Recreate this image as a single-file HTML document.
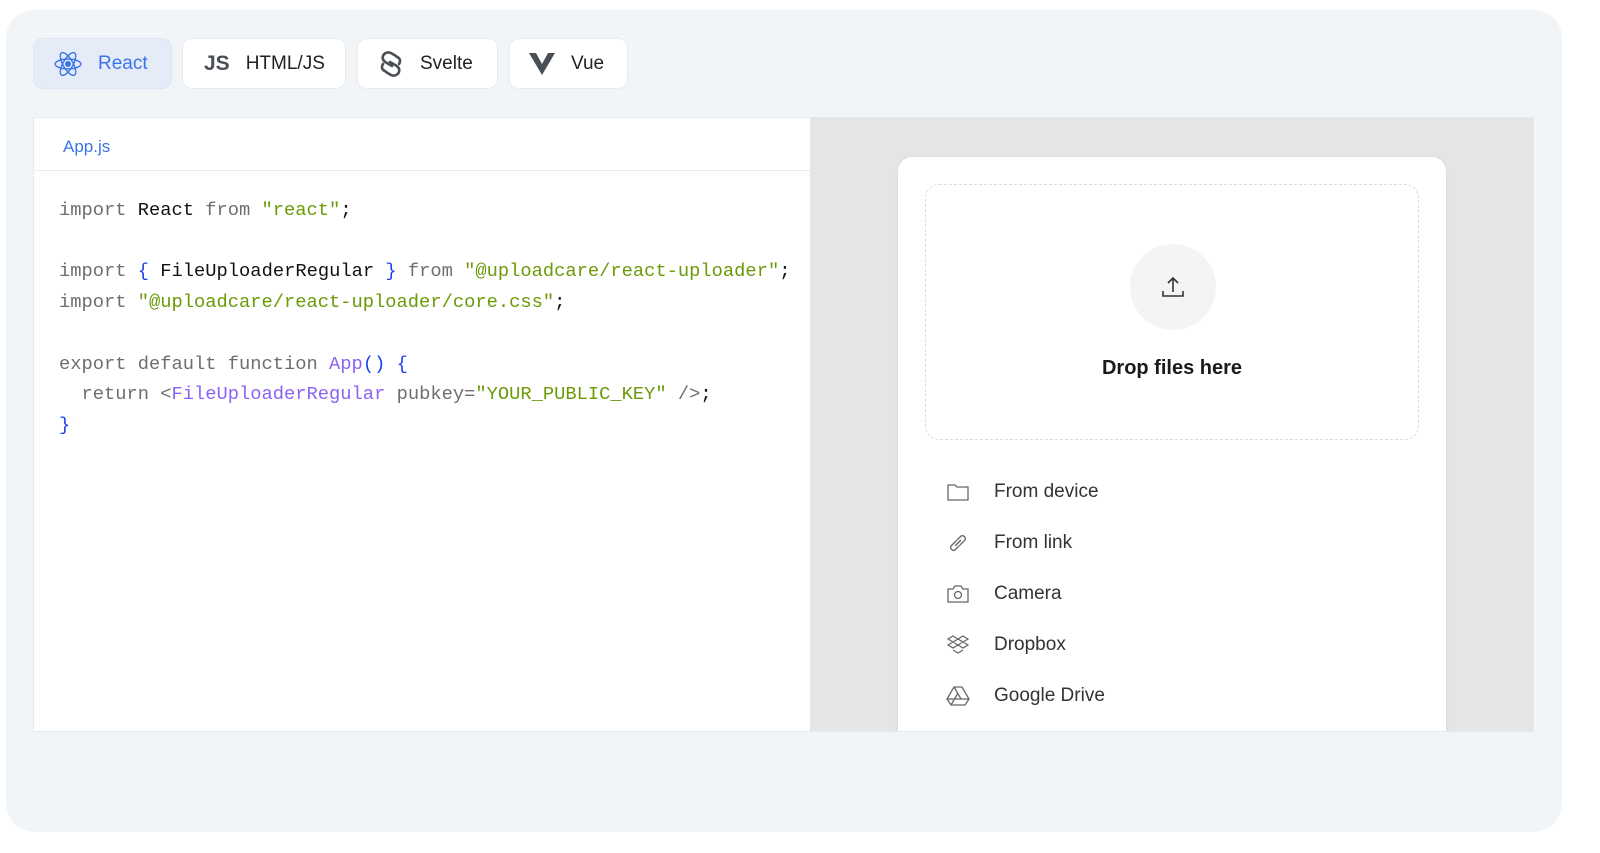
<!DOCTYPE html>
<html><head><meta charset="utf-8"><style>
*{box-sizing:border-box;margin:0;padding:0}
body{width:1600px;height:853px;background:#fff;font-family:"Liberation Sans",sans-serif;position:relative;overflow:hidden}
.outer{position:absolute;left:6px;top:10px;width:1556px;height:822px;background:#f2f5f8;border-radius:28px}
.tab{position:absolute;top:38px;height:51px;background:#fff;border:1px solid #e8ecf1;border-radius:10px;display:flex;align-items:center;font-size:19px;color:#222}
.tab svg{margin-right:16px}
.panel{position:absolute;left:33px;top:117px;width:1501px;height:615px;background:#fff;border:1px solid #e6e9ee;overflow:hidden}
.code{position:absolute;left:0;top:0;width:776px;height:615px;background:#fff}
.right{position:absolute;left:776px;top:0;right:0;height:615px;background:#e5e5e5}
.hdr{height:53px;border-bottom:1px solid #e8ebef;color:#3b74e8;font-size:17px;padding:19px 0 0 29px}
pre{font-family:"Liberation Mono",monospace;font-size:18.75px;line-height:30.7px;position:absolute;left:25px;top:77px;color:#6e6e6e}
.b{color:#111}.s{color:#6a9a06}.br{color:#1f40f0}.p{color:#8a63f5}
.card{position:absolute;left:864px;top:39px;width:548px;height:620px;background:#fff;border-radius:14px;box-shadow:0 0 3px rgba(0,0,0,.08)}
.drop{position:absolute;left:27px;top:27px;width:494px;height:256px;border:1.5px dashed #dcdcdc;border-radius:14px}
.circ{position:absolute;left:204px;top:59px;width:86px;height:86px;border-radius:50%;background:#f4f4f5;display:flex;align-items:center;justify-content:center}
.dt{position:absolute;left:0;right:0;top:172px;text-align:center;font-size:20px;font-weight:bold;color:#1a1a1a}
.item{position:absolute;left:48px;height:30px;display:flex;align-items:center;font-size:19px;color:#333}
.item svg{margin-right:24px}
</style></head><body>
<div class="outer"></div>
<div class="tab" style="left:33px;width:139px;background:#e5ecf8;border-color:#dde6f5;color:#3b74e8;padding-left:20px">
<svg width="28" height="28" viewBox="-12 -12 24 24" fill="none" stroke="#3b74e8" stroke-width="1.2"><ellipse rx="11" ry="4.2"/><ellipse rx="11" ry="4.2" transform="rotate(60)"/><ellipse rx="11" ry="4.2" transform="rotate(120)"/><circle r="2" fill="#3b74e8"/></svg>React</div>
<div class="tab" style="left:182px;width:164px;padding-left:21px"><span style="font-weight:bold;color:#4a4f55;font-size:21px;margin-right:16px">JS</span>HTML/JS</div>
<div class="tab" style="left:357px;width:141px;padding-left:20px">
<svg width="26" height="28" viewBox="0 0 26 28" fill="none" stroke="#4a4f55" stroke-width="2.6" stroke-linecap="round" stroke-linejoin="round"><path d="M18 6 L13 3 C10 1.5 6 3 5 6 C4 9 5.5 11 8 12.5 L14 16"/><path d="M8 22 L13 25 C16 26.5 20 25 21 22 C22 19 20.5 17 18 15.5 L12 12"/><path d="M5 14 C3 17 4 20 7 21"/><path d="M21 14 C23 11 22 8 19 7"/></svg>Svelte</div>
<div class="tab" style="left:509px;width:119px;padding-left:19px">
<svg width="26" height="22" viewBox="0 0 26 22" style="margin-right:16px"><path d="M0 0h7l6 11 6-11h7L13 22z" fill="#4a4f55"/></svg>Vue</div>
<div class="panel">
<div class="code"><div class="hdr">App.js</div>
<pre>import <span class="b">React</span> from <span class="s">"react"</span><span class="b">;</span>

import <span class="br">{</span> <span class="b">FileUploaderRegular</span> <span class="br">}</span> from <span class="s">"@uploadcare/react-uploader"</span><span class="b">;</span>
import <span class="s">"@uploadcare/react-uploader/core.css"</span><span class="b">;</span>

export default function <span class="p">App</span><span class="br">() {</span>
  return &lt;<span class="p">FileUploaderRegular</span> pubkey=<span class="s">"YOUR_PUBLIC_KEY"</span> /&gt;<span class="b">;</span>
<span class="br">}</span></pre></div>
<div class="right"></div>
<div class="card">
<div class="drop"><div class="circ"><svg width="26" height="26" viewBox="0 0 26 26" fill="none" stroke="#333" stroke-width="1.6"><path d="M13 18V4M8 9l5-5 5 5M3 17v5h20v-5"/></svg></div><div class="dt">Drop files here</div></div>
<div class="item" style="top:320px"><svg width="24" height="20" viewBox="0 0 24 20" fill="none" stroke="#666" stroke-width="1.3"><path d="M2 3h7l2 2h11v13H2z"/></svg>From device</div>
<div class="item" style="top:371px"><svg width="24" height="24" viewBox="0 0 24 24" fill="none" stroke="#666" stroke-width="1.3" stroke-linecap="round"><path d="M10 10l-5 5a3 3 0 0 0 4 4l4-4M14 14l5-5a3 3 0 0 0-4-4l-4 4M9.5 14.5l5-5"/></svg>From link</div>
<div class="item" style="top:422px"><svg width="24" height="20" viewBox="0 0 24 20" fill="none" stroke="#666" stroke-width="1.3"><path d="M2 5h5l2-3h6l2 3h5v13H2z"/><circle cx="12" cy="11" r="3.5"/></svg>Camera</div>
<div class="item" style="top:473px"><svg width="24" height="22" viewBox="0 0 24 22" fill="none" stroke="#666" stroke-width="1.2"><path d="M7 2l5 3-5 3-5-3zM17 2l5 3-5 3-5-3zM7 8l5 3-5 3-5-3zM17 8l5 3-5 3-5-3zM7 16l5 3 5-3"/></svg>Dropbox</div>
<div class="item" style="top:524px"><svg width="24" height="22" viewBox="0 0 24 22" fill="none" stroke="#666" stroke-width="1.3"><path d="M8 2h8l7 12-4 6H5l-4-6zM8 2l7 12h8M5 20l7-12M1 14h14"/></svg>Google Drive</div>
</div>
</div>
</body></html>
